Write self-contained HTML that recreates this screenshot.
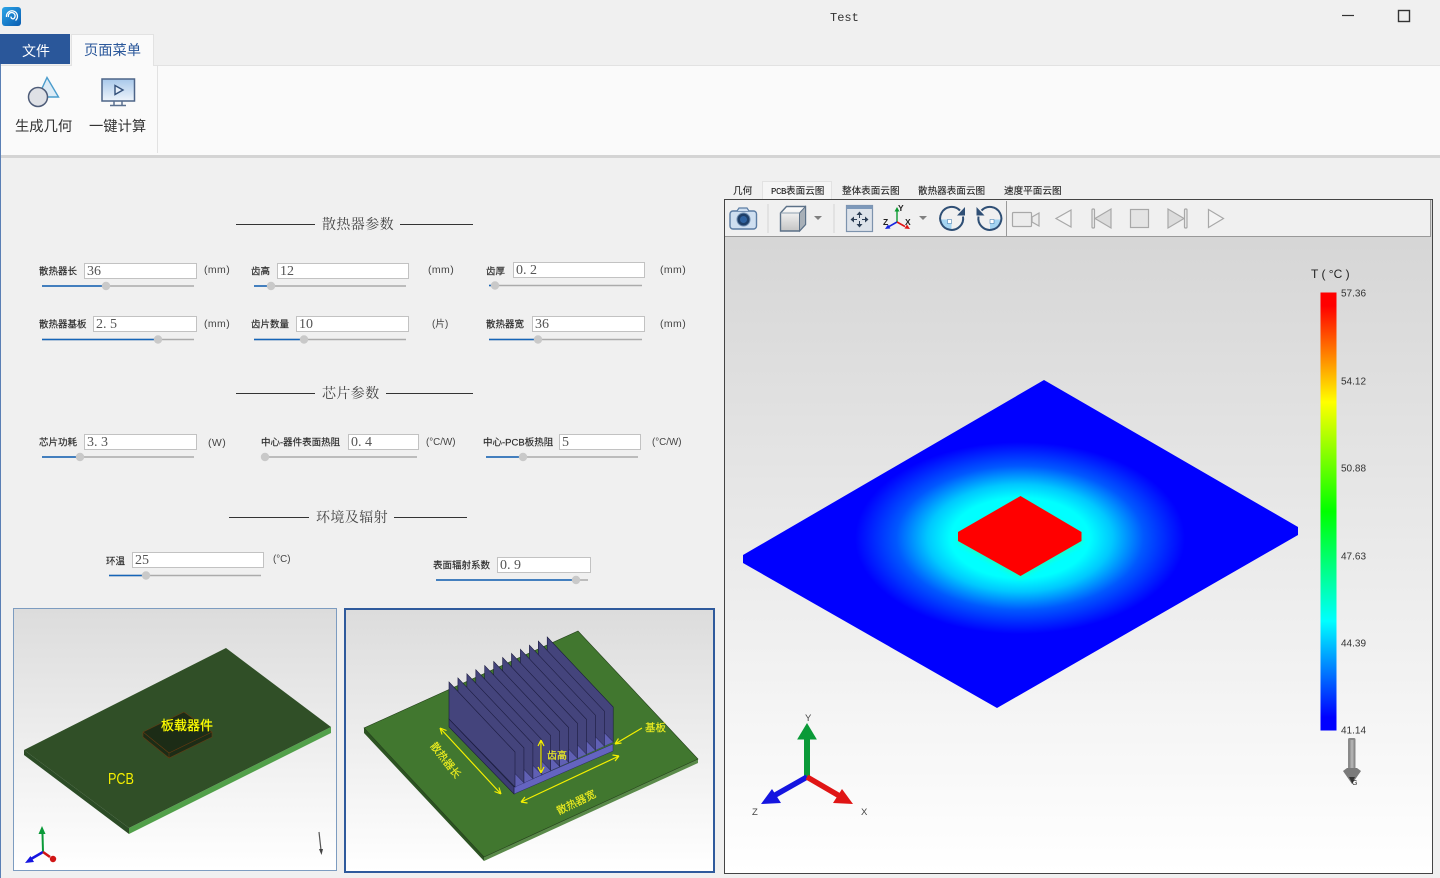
<!DOCTYPE html>
<html><head><meta charset="utf-8"><title>Test</title>
<style>
html,body{margin:0;padding:0;width:1440px;height:878px;overflow:hidden;background:#f0f0f0}
body{position:relative;font-family:"Liberation Sans","Noto Sans CJK SC",sans-serif}
.t{position:absolute;white-space:nowrap;line-height:1;transform:translateY(-50%)}
.l{font-size:9.5px;color:#2a2a2a;-webkit-text-stroke:.15px #2a2a2a;margin-top:2px}
.u{font-size:9.8px;color:#444}
.m{font-size:10.5px;letter-spacing:.4px;color:#444}
.h{font-family:"Liberation Serif","Noto Serif CJK SC",serif;font-size:14px;letter-spacing:.4px;color:#444;margin-top:1.5px}
.tab{font-size:9.6px;color:#222;margin-top:2px;-webkit-text-stroke:.1px #222}
.rb{font-size:14.3px;color:#333;margin-top:2px}
.i{position:absolute;box-sizing:border-box;height:16px;border:1px solid #c2c2c2;background:#fff;font-family:"Liberation Serif",serif;font-size:14px;line-height:16px;color:#555;padding-left:2px;white-space:pre}
.b{position:absolute;box-sizing:border-box}
svg{position:absolute;left:0;top:0}
</style></head><body>

<!-- ribbon -->
<div class="b" style="left:0;top:65px;width:1440px;height:90px;background:#fafafa;border-top:1px solid #e2e2e2"></div>
<div class="b" style="left:0;top:155px;width:1440px;height:3px;background:#d4d4d4"></div>
<div class="b" style="left:157px;top:66px;width:1px;height:87px;background:#e2e2e2"></div>
<div class="b" style="left:0;top:34px;width:70px;height:30px;background:#2a579a"></div>
<div class="b" style="left:71px;top:34px;width:83px;height:32px;background:#fafafa;border:1px solid #e2e2e2;border-bottom:0"></div>
<div class="b" style="left:0;top:64px;width:1px;height:814px;background:#5a7fb5"></div>

<div class="t" style="left:830px;top:18px;font-family:'Liberation Mono',monospace;font-size:12px;color:#333">Test</div>
<div class="t" style="left:22px;top:51px;font-size:14px;color:#fff">文件</div>
<div class="t" style="left:84px;top:51px;font-size:14.25px;color:#2a579a">页面菜单</div>
<div class="t rb" style="left:15px;top:125px">生成几何</div>
<div class="t rb" style="left:89px;top:125px">一键计算</div>

<!-- right tabs -->
<div class="b" style="left:762px;top:181px;width:70px;height:18px;background:#f5f5f5;border:1px solid #e2e2e2;border-bottom:0"></div>
<div class="t tab" style="left:733px;top:190px">几何</div>
<div class="t tab" style="left:771px;top:190px"><span style="font-family:'Liberation Mono',monospace;font-size:9px;letter-spacing:-.4px">PCB</span>表面云图</div>
<div class="t tab" style="left:842px;top:190px">整体表面云图</div>
<div class="t tab" style="left:918px;top:190px">散热器表面云图</div>
<div class="t tab" style="left:1004px;top:190px">速度平面云图</div>

<!-- viewport -->
<div class="b" style="left:724px;top:199px;width:709px;height:675px;border:1px solid #444;background:linear-gradient(#d6d6d6 37px,#d6d6d6 40px,#fff 100%)"></div>
<div class="b" style="left:725px;top:200px;width:706px;height:37px;background:#f0f0f0;border-right:1px solid #999;border-bottom:1px solid #999"></div>

<!-- image panels -->
<div class="b" style="left:13px;top:608px;width:324px;height:263px;border:1px solid #7d9cc0;background:linear-gradient(#dcdcdc,#fff)"></div>
<div class="b" style="left:344px;top:608px;width:371px;height:265px;border:2px solid #2f5a9c;background:linear-gradient(#dcdcdc,#fff)"></div>

<!-- inputs -->
<div class="t l" style="left:39px;top:270px">散热器长</div><div class="i" style="left:84px;top:263px;width:113px">36</div><div class="t m" style="left:204px;top:270px">(mm)</div>
<div class="t l" style="left:251px;top:270px">齿高</div><div class="i" style="left:277px;top:263px;width:132px">12</div><div class="t m" style="left:428px;top:270px">(mm)</div>
<div class="t l" style="left:486px;top:270px">齿厚</div><div class="i" style="left:513px;top:262px;width:132px">0. 2</div><div class="t m" style="left:660px;top:270px">(mm)</div>
<div class="t l" style="left:39px;top:323px">散热器基板</div><div class="i" style="left:93px;top:316px;width:104px">2. 5</div><div class="t m" style="left:204px;top:324px">(mm)</div>
<div class="t l" style="left:251px;top:323px">齿片数量</div><div class="i" style="left:296px;top:316px;width:113px">10</div><div class="t u" style="left:432px;top:325px">(片)</div>
<div class="t l" style="left:486px;top:323px">散热器宽</div><div class="i" style="left:532px;top:316px;width:113px">36</div><div class="t m" style="left:660px;top:324px">(mm)</div>
<div class="t l" style="left:39px;top:441px">芯片功耗</div><div class="i" style="left:84px;top:434px;width:113px">3. 3</div><div class="t m" style="left:208px;top:443px">(W)</div>
<div class="t l" style="left:261px;top:441px">中心-器件表面热阻</div><div class="i" style="left:348px;top:434px;width:71px">0. 4</div><div class="t u" style="left:426px;top:443px">(°C/W)</div>
<div class="t l" style="left:483px;top:441px">中心-PCB板热阻</div><div class="i" style="left:559px;top:434px;width:82px">5</div><div class="t u" style="left:652px;top:443px">(°C/W)</div>
<div class="t l" style="left:106px;top:560px">环温</div><div class="i" style="left:132px;top:552px;width:132px">25</div><div class="t u" style="left:273px;top:560px">(°C)</div>
<div class="t l" style="left:433px;top:564px">表面辐射系数</div><div class="i" style="left:497px;top:557px;width:94px">0. 9</div>

<div class="t h" style="left:322px;top:224px">散热器参数</div>
<div class="t h" style="left:322px;top:393px">芯片参数</div>
<div class="t h" style="left:316px;top:517px">环境及辐射</div>

<svg width="1440" height="878" viewBox="0 0 1440 878" xmlns="http://www.w3.org/2000/svg">
<defs>
<linearGradient id="lg" x1="0" y1="0" x2="1" y2="1"><stop offset="0" stop-color="#2aa5e8"/><stop offset="1" stop-color="#0a5cb0"/></linearGradient>
<linearGradient id="cb" x1="0" y1="0" x2="0" y2="1"><stop offset="0" stop-color="#f00"/><stop offset=".03" stop-color="#f00"/><stop offset=".25" stop-color="#ff0"/><stop offset=".5" stop-color="#0f0"/><stop offset=".75" stop-color="#0ff"/><stop offset=".97" stop-color="#00f"/><stop offset="1" stop-color="#00f"/></linearGradient>
<radialGradient id="glow" gradientUnits="userSpaceOnUse" cx="0" cy="0" r="1" gradientTransform="translate(1020 538) scale(165 96)"><stop offset="0" stop-color="#0ff"/><stop offset=".42" stop-color="#0ff"/><stop offset=".56" stop-color="#00c8ff"/><stop offset=".75" stop-color="#0058ff"/><stop offset="1" stop-color="#0000ff"/></radialGradient>
<linearGradient id="gb" x1="0" y1="0" x2="0" y2="1"><stop offset="0" stop-color="#fff"/><stop offset="1" stop-color="#c4c4c4"/></linearGradient>
<linearGradient id="scr" x1="0" y1="0" x2="0" y2="1"><stop offset="0" stop-color="#a8c8ea"/><stop offset="1" stop-color="#eef4fb"/></linearGradient>
<filter id="bl"><feGaussianBlur stdDeviation="3"/></filter>
<polygon id="f" points="449,682 515,752 515,787 449,719" fill="#44447c" stroke="#1c1c40" stroke-width=".6"/>
<polygon id="s" points="449,719 515,787 524,783 458,715" fill="#6060b4" stroke="#2a2a60" stroke-width=".3"/>
</defs>

<!-- logo -->
<rect x="2" y="7" width="19" height="19" rx="3" fill="url(#lg)"/>
<path d="M6.5 17a5.5 5.5 0 1 1 9 3.5M8.5 17a3.4 3.4 0 1 1 5 1.800a2 2 0 0 1-2.500-2.200" fill="none" stroke="#fff" stroke-width="1.300"/>

<!-- window controls -->
<path d="M1342 15.500h12" stroke="#333" stroke-width="1.200"/>
<rect x="1398.500" y="10.500" width="11" height="11" fill="none" stroke="#333" stroke-width="1.400"/>

<!-- ribbon icons -->
<path d="M47 77.500L58.500 97H38z" fill="#dcebf6" stroke="#4a9ccc" stroke-width="1.400"/>
<circle cx="38" cy="97" r="9.500" fill="#dfe1e6" stroke="#4e5c78" stroke-width="1.500"/>
<rect x="102" y="79" width="32.500" height="22" fill="url(#scr)" stroke="#4d6488" stroke-width="1.500"/>
<path d="M115 85.500l8 4.500-8 4.500z" fill="#e8f0fa" stroke="#33507a" stroke-width="1.400"/>
<path d="M114 101v4M122 101v4M110 105.500h16" stroke="#5b708f" stroke-width="1.500" fill="none"/>

<!-- section lines -->
<g stroke="#333" stroke-width="1">
<path d="M236 224.500h79M400 224.500h73M236 393.500h79M386 393.500h87M229 517.500h80M394 517.500h73"/>
</g>

<!-- sliders -->
<g stroke="#ababab" stroke-width="1.600" fill="none">
<path d="M42 286h152M254 286h152M489 285.500h153M42 339.500h152M254 339.500h152M489 339.500h153M42 457h152M261 457h156M486 457h152M109 575.500h152M436 580h152"/>
</g>
<g stroke="#1565b8" stroke-width="1.600" fill="none">
<path d="M42 286h64M254 286h17M489 285.500h2M42 339.500h116M254 339.500h50M489 339.500h49M42 457h38M486 457h37M109 575.500h37M436 580h140"/>
</g>
<g fill="#c9c9c9">
<circle cx="106" cy="286" r="4.200"/><circle cx="271" cy="286" r="4.200"/><circle cx="495" cy="285.500" r="4.200"/>
<circle cx="158" cy="339.500" r="4.200"/><circle cx="304" cy="339.500" r="4.200"/><circle cx="538" cy="339.500" r="4.200"/>
<circle cx="80" cy="457" r="4.200"/><circle cx="265" cy="457" r="4.200"/><circle cx="523" cy="457" r="4.200"/>
<circle cx="146" cy="575.500" r="4.200"/><circle cx="576" cy="580" r="4.200"/>
</g>

<!-- toolbar separators -->
<path d="M768 204v29M834 204v29" stroke="#d8d8d8" stroke-width="1.200"/>
<path d="M1006.500 201v35" stroke="#999" stroke-width="1"/>

<!-- camera -->
<rect x="730" y="211" width="26.500" height="18" rx="3" fill="#cfdff0" stroke="#5b7ca3" stroke-width="1.400"/>
<path d="M737 211l2-3h8l2 3" fill="#cfdff0" stroke="#5b7ca3" stroke-width="1.200"/>
<circle cx="743.500" cy="219.500" r="6.500" fill="#1f3f68" stroke="#6f8db0" stroke-width="1"/><circle cx="743.500" cy="219.500" r="3.500" fill="#2f62a0"/>
<!-- cube -->
<path d="M780.500 213l6-6.500h19v18l-6 6.500h-19z" fill="url(#gb)" stroke="#5c7188" stroke-width="1.400"/>
<path d="M799.500 213l6-6.500v18l-6 6.500z" fill="#a8b0b8" stroke="#5c7188" stroke-width="1"/>
<path d="M780.500 213h19" fill="none" stroke="#8fa0b0" stroke-width="1"/>
<path d="M814 216h8l-4 4z" fill="#808080"/>
<!-- fit -->
<rect x="846.500" y="205.500" width="26" height="26" fill="#dde3ea" stroke="#7d93ad" stroke-width="1.200"/>
<rect x="846.500" y="205.500" width="26" height="3.500" fill="#7d99ba"/>
<path d="M859.500 211.500l-3 3.500h6zM859.500 227.500l-3-3.500h6zM850.500 219.500l3.500-3v6zM868.500 219.500l-3.500-3v6z" fill="#2c3e55"/>
<path d="M859.500 215v3M859.500 221v3M854 219.500h3M862 219.500h3" stroke="#2c3e55" stroke-width="1"/>
<!-- axes small -->
<path d="M897 222v-12" stroke="#0a9a30" stroke-width="1.400"/><path d="M897 207l-2.500 4.500h5z" fill="#0a9a30"/>
<path d="M897 222l-8 4.500" stroke="#1525e0" stroke-width="1.600"/><path d="M885 229l5.500-.5-2.500-4z" fill="#1525e0"/>
<path d="M897 222l8 4.500" stroke="#e01515" stroke-width="1.600"/><path d="M910 229l-5.500-.5 2.500-4z" fill="#e01515"/>
<g font-family="Liberation Sans,sans-serif" font-size="8.500" font-weight="bold" fill="#222"><text x="898" y="211">Y</text><text x="883" y="225">Z</text><text x="905" y="225">X</text></g>
<path d="M919 216h8l-4 4z" fill="#808080"/>
<!-- rotate -->
<path d="M951.500 219.500v11a11 11 0 0 1-11-11z" fill="#a5d5f2"/><rect x="947.500" y="219.500" width="4" height="4" fill="#fff" stroke="#2f6fa5" stroke-width=".5"/>
<path d="M960 210.500a11.500 11.500 0 1 0 3 6" fill="none" stroke="#2f4f75" stroke-width="2"/>
<path d="M965 207v8.500h-8z" fill="#2f4f75"/>
<path d="M990 219.500v11a11 11 0 0 0 11-11z" fill="#a5d5f2"/><rect x="990" y="219.500" width="4" height="4" fill="#fff" stroke="#2f6fa5" stroke-width=".5"/>
<path d="M981.500 210.500a11.500 11.500 0 1 1-3 6" fill="none" stroke="#2f4f75" stroke-width="2"/>
<path d="M976.500 207v8.500h8z" fill="#2f4f75"/>
<!-- disabled buttons -->
<g stroke="#a8a8a8" stroke-width="1.200" fill="#ececec">
<rect x="1012.500" y="212.500" width="19" height="14" rx="1"/>
<path d="M1032 217l7-4v13l-7-4z"/>
<path d="M1071 210v17l-15-8.500z" fill="#f4f4f4"/>
<rect x="1092" y="209" width="2.500" height="19" rx="1"/>
<path d="M1111 209v19l-16-9.500z" fill="#dcdcdc"/>
<rect x="1130.500" y="209.500" width="18" height="18" fill="#e4e4e4"/>
<path d="M1168 209v19l16-9.500z" fill="#dcdcdc"/>
<rect x="1184.500" y="209" width="2.500" height="19" rx="1"/>
<path d="M1208.500 209.500v18l15-9z" fill="#f4f4f4"/>
</g>

<!-- heat plate -->
<polygon points="1044,380 1298,527 1298,535 997,708 743,563 743,555" fill="url(#glow)"/>
<polygon points="1021,498 1082,535 1082,543 1020,578 958,543 958,535" fill="#30ff90" filter="url(#bl)" opacity=".6"/>
<polygon points="1020.500,496 1081.500,532 1081.500,541 1020.500,576 958,541 958,532" fill="#f00"/>

<!-- colorbar -->
<rect x="1320.500" y="292.500" width="16" height="438" fill="url(#cb)"/>
<text x="1311" y="278" font-family="Liberation Sans,sans-serif" font-size="12" fill="#222">T ( °C )</text>
<g font-family="Liberation Sans,sans-serif" font-size="10" fill="#333">
<text x="1341" y="296.500">57.36</text><text x="1341" y="384.500">54.12</text><text x="1341" y="471.500">50.88</text><text x="1341" y="559.500">47.63</text><text x="1341" y="646.500">44.39</text><text x="1341" y="733.500">41.14</text>
</g>
<!-- gravity arrow -->
<rect x="1348" y="738" width="7.500" height="31" rx="1.500" fill="#8a8a8a"/><rect x="1350.500" y="740" width="3" height="29" fill="#b0b0b0"/>
<path d="M1343 771l4-3h10l4 3-9 13z" fill="#7a7a7a"/>
<path d="M1349 777l3 6 3-6z" fill="#333"/>
<text x="1352" y="785" font-family="Liberation Sans,sans-serif" font-size="7" fill="#222">G</text>

<!-- main axes -->
<path d="M807 777v-40" stroke="#0a9a38" stroke-width="6"/><path d="M807 724l-9 15h18z" fill="#0a9a38" stroke="#0a9a38" stroke-width="1"/>
<path d="M807 777l-37 21" stroke="#1515e0" stroke-width="5.500"/><path d="M761 804l20-1-9-14z" fill="#1515e0"/>
<path d="M807 777l36 21" stroke="#e01515" stroke-width="5.500"/><path d="M853 804l-20-1 9-14z" fill="#e01515"/>
<g font-family="Liberation Sans,sans-serif" font-size="9.500" fill="#444"><text x="805" y="721">Y</text><text x="752" y="815">Z</text><text x="861" y="815">X</text></g>

<!-- image 1 -->
<polygon points="24,750 129,828 129,834 24,755" fill="#2c4c26"/>
<polygon points="129,828 331,727 331,733 129,834" fill="#52a04a"/>
<polygon points="226,648 331,727 129,828 24,750" fill="#304f27"/>
<polygon points="143,732 143,737 169,758 212,737 212,732 184,712" fill="#1c2c16" stroke="#6a3a10" stroke-width=".6"/>
<path d="M143 732l26 21 43-21M169 753v5" fill="none" stroke="#6a3a10" stroke-width=".6"/>
<text x="161" y="730" font-family="Noto Sans CJK SC,sans-serif" font-size="13" fill="#ff0" stroke="#ff0" stroke-width=".25">板载器件</text>
<text x="108" y="784" font-family="Liberation Sans,sans-serif" font-size="16" fill="#f5f000" textLength="26" lengthAdjust="spacingAndGlyphs">PCB</text>
<path d="M43 852l-.5-18" stroke="#0a9a38" stroke-width="2"/><path d="M42 826l-3.500 8h7z" fill="#0a9a38"/>
<path d="M43 852l-12 7" stroke="#1515e0" stroke-width="2.600"/><path d="M25 863l9-1-3.500-6z" fill="#1515e0"/>
<path d="M43 852l7 5" stroke="#d01515" stroke-width="2.600"/><circle cx="53" cy="859" r="3.200" fill="#d01515"/>
<path d="M319 832l2 18" stroke="#555" stroke-width="1.200"/><path d="M321.500 855l-2.500-6h4z" fill="#444"/>

<!-- image 2 -->
<polygon points="364,728 484,857 484,861 364,733" fill="#2c5322"/>
<polygon points="484,857 698,759 698,763 484,861" fill="#5a8a4a"/>
<polygon points="578,631 698,759 484,857 364,728" fill="#41772f" stroke="#233f1a" stroke-width=".6"/>
<polygon points="514,787 613,744 613,751 514,794" fill="#6464c0" stroke="#2a2a60" stroke-width=".5"/>
<polygon points="449,719 514,787 514,794 449,727" fill="#3d3d74" stroke="#1c1c40" stroke-width=".6"/>
<use href="#f" transform="translate(98.200 -45)"/>
<use href="#s" transform="translate(89.300 -40.900)"/><use href="#f" transform="translate(89.300 -40.900)"/>
<use href="#s" transform="translate(80.400 -36.800)"/><use href="#f" transform="translate(80.400 -36.800)"/>
<use href="#s" transform="translate(71.400 -32.700)"/><use href="#f" transform="translate(71.400 -32.700)"/>
<use href="#s" transform="translate(62.500 -28.600)"/><use href="#f" transform="translate(62.500 -28.600)"/>
<use href="#s" transform="translate(53.600 -24.500)"/><use href="#f" transform="translate(53.600 -24.500)"/>
<use href="#s" transform="translate(44.700 -20.500)"/><use href="#f" transform="translate(44.700 -20.500)"/>
<use href="#s" transform="translate(35.700 -16.400)"/><use href="#f" transform="translate(35.700 -16.400)"/>
<use href="#s" transform="translate(26.800 -12.300)"/><use href="#f" transform="translate(26.800 -12.300)"/>
<use href="#s" transform="translate(17.900 -8.200)"/><use href="#f" transform="translate(17.900 -8.200)"/>
<use href="#s" transform="translate(8.930 -4.090)"/><use href="#f" transform="translate(8.930 -4.090)"/>
<use href="#s"/><use href="#f"/>
<g stroke="#f5f000" stroke-width="1.200" fill="none">
<path d="M440 728l61 66M440 728l6.500 2.500M440 728l2 6.500M501 794l-6.500-2.500M501 794l-2-6.500"/>
<path d="M521 802l98-46M521 802l4-5M521 802l6.500 1M619 756l-4 5M619 756l-6.500-1"/>
<path d="M541 740v33M541 740l-3 6M541 740l3 6M541 773l-3-6M541 773l3-6"/>
<path d="M642 728l-27 16M615 744l6.500-1M615 744l3.500-5.500"/>
</g>
<g font-family="Noto Sans CJK SC,sans-serif" fill="#eeee20" stroke="#eeee20" stroke-width=".15">
<text x="446" y="764" font-size="10.500" text-anchor="middle" transform="rotate(52 446 760)">散热器长</text>
<text x="576" y="806" font-size="10.500" text-anchor="middle" transform="rotate(-26 576 802)">散热器宽</text>
<text x="547" y="759" font-size="10">齿高</text>
<text x="645" y="731" font-size="10.500">基板</text>
</g>
</svg>
</body></html>
